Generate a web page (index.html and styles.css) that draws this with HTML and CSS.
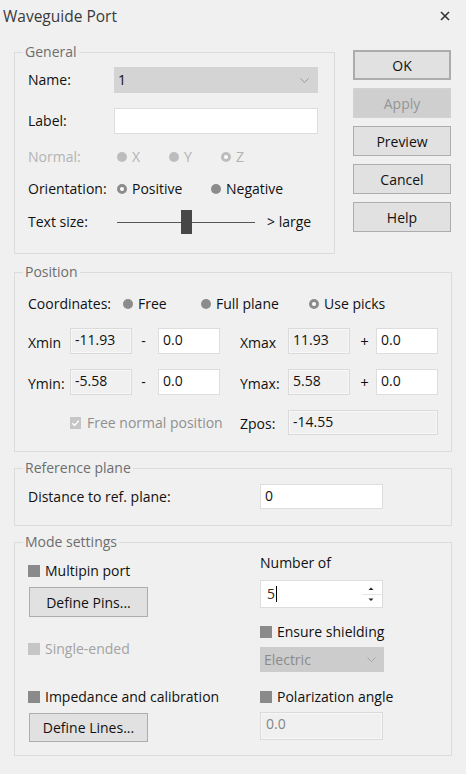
FILE: index.html
```html
<!DOCTYPE html>
<html lang="en">
<head>
<meta charset="utf-8">
<title>Waveguide Port</title>
<link rel="stylesheet" href="styles.css">
</head>
<body>
<div class="dialog">
  <header class="titlebar">
    <span class="title">Waveguide Port</span>
    <svg class="close" width="10" height="10" viewBox="0 0 10 10"><path d="M1 1L9 9M9 1L1 9" stroke="#333" stroke-width="1.6" fill="none"/></svg>
  </header>
  <main class="content">
    <div class="top">
      <fieldset class="group general">
        <legend>General</legend>
        <div class="row name-row">
          <span class="lbl">Name:</span>
          <div class="select">1<svg class="chev" width="9" height="5" viewBox="0 0 9 5"><path d="M0.5 0.5L4.5 4.5L8.5 0.5" stroke="#9a9a9a" fill="none"/></svg></div>
        </div>
        <div class="row label-row">
          <span class="lbl">Label:</span>
          <div class="input wide"></div>
        </div>
        <div class="row normal-row disabled">
          <span class="lbl">Normal:</span>
          <div class="radios">
            <span class="opt w52"><span class="radio dis"></span>X</span>
            <span class="opt w52"><span class="radio dis"></span>Y</span>
            <span class="opt"><span class="radio dis on"></span>Z</span>
          </div>
        </div>
        <div class="row orient-row">
          <span class="lbl">Orientation:</span>
          <div class="radios">
            <span class="opt w94"><span class="radio on"></span>Positive</span>
            <span class="opt"><span class="radio"></span>Negative</span>
          </div>
        </div>
        <div class="row size-row">
          <span class="lbl">Text size:</span>
          <div class="slider">
            <span class="track t1"></span><span class="thumb"></span><span class="track t2"></span>
          </div>
          <span class="large">&gt; large</span>
        </div>
      </fieldset>
      <div class="buttons">
        <div class="btn default">OK</div>
        <div class="btn disabled-btn">Apply</div>
        <div class="btn">Preview</div>
        <div class="btn">Cancel</div>
        <div class="btn">Help</div>
      </div>
    </div>

    <fieldset class="group position">
      <legend>Position</legend>
      <div class="row coord-row">
        <span class="lbl coord-lbl">Coordinates:</span>
        <span class="opt w78"><span class="radio"></span>Free</span>
        <span class="opt w108"><span class="radio"></span>Full plane</span>
        <span class="opt"><span class="radio on"></span>Use picks</span>
      </div>
      <div class="pgrid xrow">
        <span class="plbl">Xmin</span>
        <div class="ro">-11.93</div>
        <span class="sign">-</span>
        <div class="input">0.0</div>
        <span></span>
        <span class="plbl">Xmax</span>
        <div class="ro">11.93</div>
        <span class="sign plus">+</span>
        <div class="input">0.0</div>
      </div>
      <div class="pgrid yrow">
        <span class="plbl">Ymin:</span>
        <div class="ro">-5.58</div>
        <span class="sign">-</span>
        <div class="input">0.0</div>
        <span></span>
        <span class="plbl">Ymax:</span>
        <div class="ro">5.58</div>
        <span class="sign plus">+</span>
        <div class="input">0.0</div>
      </div>
      <div class="pgrid zrow">
        <span class="freepos"><span class="check dis checked"><svg width="12" height="12" viewBox="0 0 12 12"><path d="M2.5 6.2L5 8.6L9.6 3.4" stroke="#fff" stroke-width="1.6" fill="none"/></svg></span>Free normal position</span>
        <span class="plbl zlbl">Zpos:</span>
        <div class="ro zbox">-14.55</div>
      </div>
    </fieldset>

    <fieldset class="group refplane">
      <legend>Reference plane</legend>
      <div class="row dist-row">
        <span class="dist-lbl">Distance to ref. plane:</span>
        <div class="input w123">0</div>
      </div>
    </fieldset>

    <fieldset class="group mode">
      <legend>Mode settings</legend>
      <div class="mode-cols">
        <div class="mcol left">
          <div class="crow multipin"><span class="check"></span>Multipin port</div>
          <div class="btn wide-btn pins">Define Pins...</div>
          <div class="crow single disabled"><span class="check dis"></span>Single-ended</div>
          <div class="crow imped"><span class="check"></span>Impedance and calibration</div>
          <div class="btn wide-btn lines">Define Lines...</div>
        </div>
        <div class="mcol right">
          <div class="crow numof">Number of</div>
          <div class="input spin"><span class="val">5</span><span class="caret"></span>
            <svg class="spinarrows" width="22" height="26" viewBox="0 0 22 26"><path d="M8.5 9L11 6.5L13.5 9Z" fill="#222"/><path d="M2 13.5H22" stroke="#e6e6e6"/><path d="M8.5 17.5L11 20L13.5 17.5Z" fill="#222"/></svg>
          </div>
          <div class="crow shield"><span class="check"></span>Ensure shielding</div>
          <div class="select dsel">Electric<svg class="chev" width="9" height="5" viewBox="0 0 9 5"><path d="M0.5 0.5L4.5 4.5L8.5 0.5" stroke="#a8a8a8" fill="none"/></svg></div>
          <div class="crow polar"><span class="check"></span>Polarization angle</div>
          <div class="ro polbox">0.0</div>
        </div>
      </div>
    </fieldset>
  </main>
</div>
</body>
</html>
```

FILE: styles.css
```css
* { box-sizing: border-box; }
html, body { margin: 0; padding: 0; }
body {
  background: #f0f0f0;
  font-family: "Open Sans", "Noto Sans", sans-serif;
  font-size: 14px;
  color: #111;
}
.dialog { width: 466px; height: 774px; overflow: hidden; }

.titlebar {
  height: 31px;
  display: flex;
  align-items: center;
  justify-content: space-between;
  padding: 0 16px 0 3px;
}
.title { font-size: 15.5px; color: #3a3a3a; }

.content { padding: 11px 14px 0 14px; }
.top { display: flex; gap: 18px; }

.group {
  margin: 0;
  padding: 0;
  border: 1px solid #dcdcdc;
  min-width: 0;
}
.group legend {
  margin-left: 8px;
  padding: 0 2px;
  line-height: 20px;
  color: #6e6e6e;
}
.row { display: flex; align-items: center; padding-left: 13px; white-space: nowrap; }

/* General */
.general { width: 321px; padding-bottom: 18px; }
.lbl { width: 86px; flex: none; line-height: 20px; }
.name-row { margin-top: 5px; height: 26px; }
.select {
  width: 204px;
  height: 26px;
  background: #d4d4d4;
  display: flex;
  align-items: center;
  justify-content: space-between;
  padding: 0 9px 0 4px;
  line-height: 20px;
}
.label-row { margin-top: 15px; height: 26px; }
.input {
  height: 26px;
  width: 62px;
  background: #fff;
  border: 1px solid #dddddd;
  padding: 0 4px;
  line-height: 22px;
}
.input.wide { width: 204px; }
.normal-row { margin-top: 13px; height: 20px; }
.disabled { color: #b3b3b3; }
.orient-row { margin-top: 12px; height: 20px; }
.radios { display: flex; padding-left: 3px; }
.opt { display: flex; align-items: center; line-height: 20px; flex: none; white-space: nowrap; }
.w52 { width: 52px; }
.w94 { width: 94px; }
.w78 { width: 78px; }
.w108 { width: 108px; }
.radio {
  width: 10px;
  height: 10px;
  border-radius: 50%;
  background: #8c8c8c;
  margin-right: 5px;
  flex: none;
}
.radio.on { background: #fff; border: 3px solid #8c8c8c; }
.radio.dis { background: #bdbdbd; }
.radio.dis.on { background: #fff; border-color: #bdbdbd; }

.size-row { margin-top: 10px; height: 26px; }
.slider { display: flex; align-items: center; padding-left: 3px; height: 26px; }
.track { height: 1px; background: #555; }
.t1 { width: 64px; }
.t2 { width: 63px; }
.thumb { width: 11px; height: 24px; background: #474747; }
.large { margin-left: 12px; line-height: 20px; }

/* Buttons */
.buttons { width: 98px; padding-top: 8px; display: flex; flex-direction: column; gap: 8px; }
.btn {
  height: 30px;
  background: #e1e1e1;
  border: 1px solid #adadad;
  display: flex;
  align-items: center;
  justify-content: center;
  color: #111;
  white-space: nowrap;
}
.btn.default { border: 2px solid #acacac; }
.btn.disabled-btn { background: #cfcfcf; border-color: #d2d2d2; color: #959595; }

/* Position */
.position { margin-top: 8px; padding-bottom: 16px; }
.coord-row { margin-top: 12px; height: 20px; }
.coord-lbl { width: 95px; }
.pgrid {
  display: grid;
  grid-template-columns: 42px 62px 26px 62px 20px 48px 62px 26px 62px;
  align-items: center;
  padding-left: 13px;
  height: 26px;
  white-space: nowrap;
}
.xrow { margin-top: 14px; }
.yrow { margin-top: 15px; }
.zrow { margin-top: 15px; height: 25px; }
.plbl { line-height: 20px; padding-top: 3px; }
.ro {
  height: 26px;
  background: #f0f0f0;
  border: 1px solid #dadada;
  box-shadow: inset 0 0 0 1px #f7f7f7;
  padding: 0 4px;
  line-height: 22px;
}
.sign { text-align: center; padding-right: 3px; line-height: 20px; }
.sign.plus { padding-right: 0; padding-left: 3px; font-size: 15px; }
.freepos {
  grid-column: 2 / 5;
  display: flex;
  align-items: center;
  color: #8f8f8f;
  line-height: 20px;
}
.zlbl { grid-column: 6; }
.zbox { grid-column: 7 / 10; height: 25px; }
.check {
  width: 12px;
  height: 12px;
  background: #8a8a8a;
  margin-right: 5px;
  flex: none;
  display: inline-flex;
}
.check.dis { background: #c6c6c6; }
.freepos .check { width: 11px; height: 12px; margin-right: 6px; }

/* Reference plane */
.refplane { margin-top: 6px; padding-bottom: 16px; }
.dist-row { margin-top: 6px; height: 25px; }
.dist-lbl { width: 232px; line-height: 20px; }
.w123 { width: 123px; height: 25px; }

/* Mode settings */
.mode { margin-top: 6px; padding-bottom: 13px; }
.mode-cols { display: flex; padding-left: 13px; }
.mcol { display: flex; flex-direction: column; }
.mcol.left { width: 232px; }
.mcol.right { width: 124px; }
.crow { display: flex; align-items: center; height: 20px; line-height: 20px; white-space: nowrap; }
.multipin { margin-top: 9px; }
.wide-btn { width: 119px; margin-left: 1px; height: 30px; }
.pins { margin-top: 6px; }
.single { margin-top: 22px; color: #a3a3a3; }
.imped { margin-top: 28px; }
.lines { margin-top: 6px; height: 29px; }

.numof { margin-top: 1px; }
.spin {
  margin-top: 7px;
  width: 123px;
  height: 28px;
  position: relative;
  display: flex;
  align-items: center;
  padding-left: 6px;
}
.val { color: #3b2a1a; }
.caret { width: 1px; height: 16px; background: #000; margin-left: 1px; }
.spinarrows { position: absolute; right: 0; top: 0; }
.shield { margin-top: 14px; }
.dsel { margin-top: 5px; width: 124px; height: 25px; background: #cccccc; color: #8a8a8a; padding-right: 8px; }
.polar { margin-top: 15px; }
.polbox { margin-top: 5px; width: 123px; height: 28px; color: #858585; padding-left: 5px; }
```
